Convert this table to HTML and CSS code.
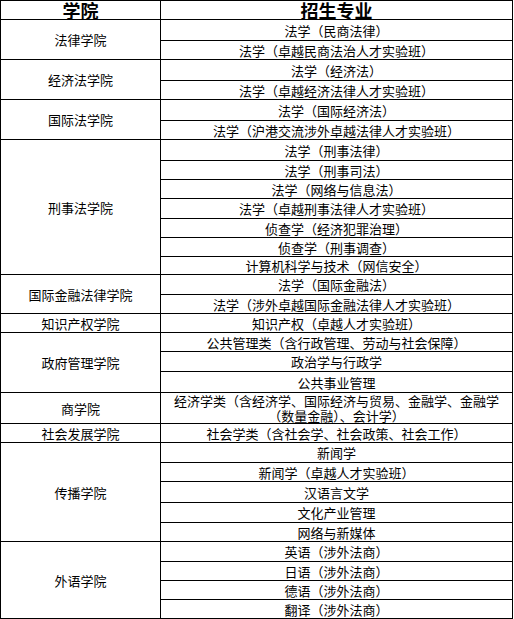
FILE: index.html
```html
<!DOCTYPE html>
<html lang="zh-CN">
<head>
<meta charset="utf-8">
<title>学院与招生专业</title>
<link rel="stylesheet" href="styles.css">
</head>
<body>
<div class="table">
  <div class="cell head">学院</div>
  <div class="cell head major">招生专业</div>

  <div class="cell school span-2">法律学院</div>
  <div class="cell major">法学（民商法律）</div>
  <div class="cell major">法学（卓越民商法治人才实验班）</div>

  <div class="cell school span-2">经济法学院</div>
  <div class="cell major">法学（经济法）</div>
  <div class="cell major">法学（卓越经济法律人才实验班）</div>

  <div class="cell school span-2">国际法学院</div>
  <div class="cell major">法学（国际经济法）</div>
  <div class="cell major">法学（沪港交流涉外卓越法律人才实验班）</div>

  <div class="cell school span-7">刑事法学院</div>
  <div class="cell major">法学（刑事法律）</div>
  <div class="cell major">法学（刑事司法）</div>
  <div class="cell major">法学（网络与信息法）</div>
  <div class="cell major">法学（卓越刑事法律人才实验班）</div>
  <div class="cell major">侦查学（经济犯罪治理）</div>
  <div class="cell major">侦查学（刑事调查）</div>
  <div class="cell major">计算机科学与技术（网信安全）</div>

  <div class="cell school span-2">国际金融法律学院</div>
  <div class="cell major">法学（国际金融法）</div>
  <div class="cell major">法学（涉外卓越国际金融法律人才实验班）</div>

  <div class="cell school">知识产权学院</div>
  <div class="cell major">知识产权（卓越人才实验班）</div>

  <div class="cell school span-3">政府管理学院</div>
  <div class="cell major">公共管理类（含行政管理、劳动与社会保障）</div>
  <div class="cell major">政治学与行政学</div>
  <div class="cell major">公共事业管理</div>

  <div class="cell school">商学院</div>
  <div class="cell major multi">经济学类（含经济学、国际经济与贸易、金融学、金融学<br>（数量金融）、会计学）</div>

  <div class="cell school">社会发展学院</div>
  <div class="cell major">社会学类（含社会学、社会政策、社会工作）</div>

  <div class="cell school span-5">传播学院</div>
  <div class="cell major">新闻学</div>
  <div class="cell major">新闻学（卓越人才实验班）</div>
  <div class="cell major">汉语言文学</div>
  <div class="cell major">文化产业管理</div>
  <div class="cell major">网络与新媒体</div>

  <div class="cell school span-4">外语学院</div>
  <div class="cell major">英语（涉外法商）</div>
  <div class="cell major">日语（涉外法商）</div>
  <div class="cell major">德语（涉外法商）</div>
  <div class="cell major">翻译（涉外法商）</div>
</div>
</body>
</html>
```
FILE: styles.css
```css
html, body {
  margin: 0;
  padding: 0;
  background: #fff;
}

body {
  font-family: "Noto Sans CJK SC", "Noto Sans", sans-serif;
  font-size: 13px;
  color: #000;
}

.table {
  display: grid;
  width: max-content;
  grid-template-columns: 159px 351px;
  grid-template-rows:
    18px 20px 18px 20px 18px 20px 18px 20px 18px 18px
    19px 18px 18px 17px 19px 18px 18px 18px 19px 20px
    30px 18px 19px 18px 20px 19px 18px 19px 18px 18px 18px;
  gap: 1px;
  padding: 1px;
  background: #000;
}

.cell {
  background: #fff;
  display: flex;
  align-items: center;
  justify-content: center;
  text-align: center;
  line-height: 15px;
  white-space: nowrap;
  overflow: visible;
}

.head {
  font-size: 18px;
  font-weight: 700;
  line-height: 18px;
}

.school {
  grid-column: 1;
}

.major {
  grid-column: 2;
}

.span-2 { grid-row: span 2; }
.span-3 { grid-row: span 3; }
.span-4 { grid-row: span 4; }
.span-5 { grid-row: span 5; }
.span-7 { grid-row: span 7; }

.multi {
  line-height: 15px;
}
```
